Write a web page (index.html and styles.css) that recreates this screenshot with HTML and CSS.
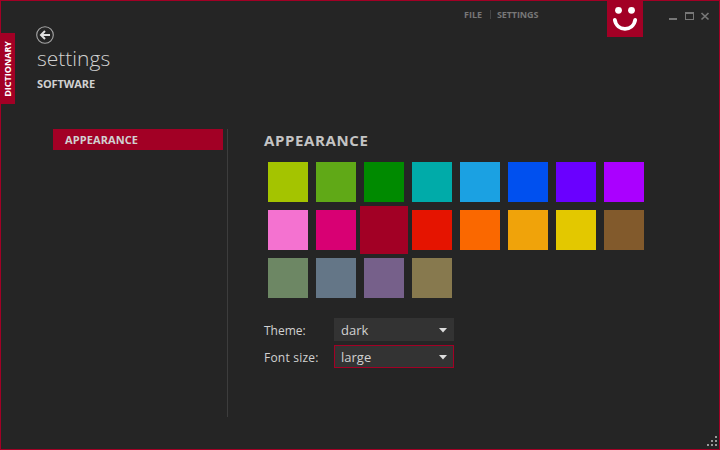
FILE: index.html
```
<!DOCTYPE html>
<html lang="en">
<head>
<meta charset="utf-8">
<title>Settings</title>
<link rel="stylesheet" href="styles.css">
</head>
<body>
<div class="window">
  <aside class="rail"><div class="tab"><span>DICTIONARY</span></div></aside>
  <header class="header">
    <div class="title">
      <svg class="back" width="18" height="18" viewBox="0 0 18 18"><circle cx="9" cy="9" r="8.3" fill="none" stroke="#a6a6a6" stroke-width="1.1"/><path d="M14 9H5.5M9 5L5 9l4 4" fill="none" stroke="#e0e0e0" stroke-width="2"/></svg>
      <h1>settings</h1>
      <h2>SOFTWARE</h2>
    </div>
    <nav class="menu"><span class="file">FILE</span><i></i><span class="set">SETTINGS</span></nav>
    <div class="logo"><svg width="36" height="37" viewBox="0 0 36 37"><circle cx="11.5" cy="10.3" r="3.4" fill="#fff"/><circle cx="24.5" cy="10.3" r="3.4" fill="#fff"/><path d="M7.8 19.8C9.6 31.8 26.4 31.8 28.2 19.8" fill="none" stroke="#fff" stroke-width="3.8" stroke-linecap="round"/></svg></div>
    <svg class="controls" width="42" height="12" viewBox="0 0 42 12"><path d="M0 7h8v2H0z M16 1h9v8h-9z M17 3v5h7V3z" fill="#777" fill-rule="evenodd"/><path d="M32.5 2l7 6.5M39.5 2l-7 6.5" stroke="#777" stroke-width="1.7"/></svg>
  </header>
  <nav class="side"><div class="item"><span>APPEARANCE</span></div></nav>
  <main class="content">
    <h3>APPEARANCE</h3>
    <div class="swatches">
      <b class="lime"></b><b class="green"></b><b class="emerald"></b><b class="teal"></b><b class="cyan"></b><b class="cobalt"></b><b class="indigo"></b><b class="violet"></b>
      <b class="pink"></b><b class="magenta"></b><b class="crimson selected"></b><b class="red"></b><b class="orange"></b><b class="amber"></b><b class="yellow"></b><b class="brown"></b>
      <b class="olive"></b><b class="steel"></b><b class="mauve"></b><b class="taupe"></b>
    </div>
    <div class="row"><label class="l-theme">Theme:</label><div class="select"><span class="v-dark">dark</span><svg width="8" height="6"><path d="M0 1h8L4 5.5z" fill="#ddd"/></svg></div></div>
    <div class="row"><label class="l-size">Font size:</label><div class="select focus"><span class="v-large">large</span><svg width="8" height="6"><path d="M0 1h8L4 5.5z" fill="#ddd"/></svg></div></div>
  </main>
  <svg class="grip" width="11" height="11"><path d="M8 0h2v2h-2zM4 4h2v2H4zM8 4h2v2H8zM0 8h2v2H0zM4 8h2v2H4zM8 8h2v2H8z" fill="#999"/></svg>
</div>
</body>
</html>
```
FILE: styles.css
```
* { box-sizing: border-box; margin: 0; padding: 0; }
body { font-family: "Open Sans", "Noto Sans", sans-serif; color: #d1d1d1; background: #252525; overflow: hidden; }
.window { position: relative; width: 720px; height: 450px; border: 1px solid #a20025; background: #252525; display: grid; grid-template-columns: 36px 191px 1fr; grid-template-rows: 128px 1fr; }
.rail { grid-row: 1 / 3; padding-top: 32px; }
.tab { width: 14px; height: 71px; background: #a20025; color: #fff; display: flex; align-items: center; justify-content: center; }
.tab span { writing-mode: vertical-rl; transform: rotate(180deg); font-size: 9px; line-height: 14px; font-weight: 700; white-space: nowrap; }
.header { grid-column: 2 / 4; display: flex; align-items: flex-start; white-space: nowrap; }
.title { width: 427px; padding-top: 25px; }
.back { display: block; margin-left: -1px; }
h1 { font-size: 21px; line-height: 28px; font-weight: 300; }
h2 { font-size: 11px; line-height: 16px; font-weight: 700; margin-top: 4px; letter-spacing: -0.1px; }
.menu { width: 143px; display: flex; font-size: 9px; line-height: 12px; font-weight: 700; color: #777; padding-top: 8px; }
.menu i { width: 1px; height: 9px; margin: 1px 6px 0 0; background: #444; }
.menu .file { width: 26px; }
.menu .set { letter-spacing: -0.12px; }
.logo { width: 36px; height: 37px; background: #a20025; margin-top: -1px; }
.logo svg { display: block; }
.controls { margin: 10px 0 0 26px; }
.side { padding-left: 16px; border-right: 1px solid #3d3d3d; height: 288px; }
.item { width: 170px; height: 21px; line-height: 21px; padding-left: 12px; background: #a20025; font-size: 11px; font-weight: 700; letter-spacing: 0.1px; }
.content { padding-left: 36px; }
h3 { font-size: 15px; line-height: 22px; font-weight: 700; color: #c4c4c4; letter-spacing: 0.62px; }
.swatches { display: grid; grid-template-columns: repeat(8, 40px); grid-auto-rows: 40px; gap: 8px; margin: 11px 0 20px 4px; }
.selected { margin: -4px; }
.lime { background: #a4c400; } .green { background: #60a917; } .emerald { background: #008a00; } .teal { background: #00aba9; }
.cyan { background: #1ba1e2; } .cobalt { background: #0050ef; } .indigo { background: #6a00ff; } .violet { background: #aa00ff; }
.pink { background: #f472d0; } .magenta { background: #d80073; } .crimson { background: #a20025; } .red { background: #e51400; }
.orange { background: #fa6800; } .amber { background: #f0a30a; } .yellow { background: #e3c800; } .brown { background: #825a2c; }
.olive { background: #6d8764; } .steel { background: #647687; } .mauve { background: #76608a; } .taupe { background: #87794e; }
.row { display: flex; height: 23px; margin-bottom: 4px; font-size: 12px; line-height: 23px; white-space: nowrap; }
label { width: 70px; padding-top: 1px; }
.l-size { letter-spacing: 0.22px; }
.select { width: 120px; height: 23px; border: 1px solid #333; background: #333; display: flex; justify-content: space-between; align-items: center; padding: 0 6px; font-size: 13px; }
.select span { padding-top: 2px; }
.focus { border-color: #a20025; }
.grip { position: absolute; right: 1px; bottom: 2px; }
```
